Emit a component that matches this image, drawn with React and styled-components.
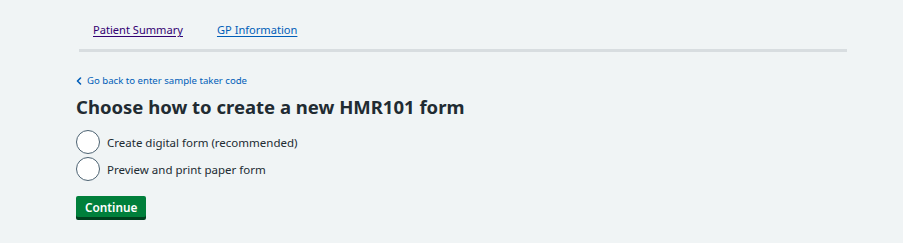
import React from 'react';
import styled, { createGlobalStyle } from 'styled-components';

const GlobalStyle = createGlobalStyle`
  html, body {
    margin: 0;
    padding: 0;
    background: #f0f4f5;
  }
  body {
    font-family: 'Noto Sans', Arial, sans-serif;
    color: #212b32;
  }
`;

const Page = styled.div`
  width: 903px;
  height: 243px;
  box-sizing: border-box;
  padding: 0 56px 0 76px;
`;

const TabBar = styled.nav`
  display: flex;
  gap: 34px;
  margin-left: 3px;
  padding: 21px 0 0 14px;
  height: 28px;
  border-bottom: 3px solid #d8dde0;
`;

const TabLink = styled.a`
  font-size: 11.1px;
  line-height: 18px;
  color: ${({ $visited }) => ($visited ? '#330072' : '#005eb8')};
  text-decoration: underline;
  text-underline-offset: 2px;
  cursor: pointer;
`;

const BackLink = styled.a`
  display: inline-flex;
  align-items: center;
  gap: 5px;
  margin-top: 22px;
  font-size: 9.6px;
  line-height: 14px;
  color: #005eb8;
  text-decoration: none;
`;

const Heading = styled.h1`
  margin: 4px 0 10px;
  font-size: 18.5px;
  line-height: 26px;
  font-weight: 700;
`;

const RadioList = styled.div`
  display: flex;
  flex-direction: column;
  gap: 3px;
`;

const RadioRow = styled.label`
  display: flex;
  align-items: center;
  gap: 7px;
  height: 24px;
  font-size: 11.5px;
  cursor: pointer;
`;

const RadioCircle = styled.span`
  box-sizing: border-box;
  width: 24px;
  height: 24px;
  border: 1.5px solid #4c6272;
  border-radius: 50%;
  background: #ffffff;
  flex-shrink: 0;
`;

const Button = styled.button`
  display: block;
  margin-top: 15px;
  padding: 0 9px;
  height: 21px;
  border: none;
  border-radius: 2px;
  background: #007f3b;
  box-shadow: 0 3px 0 #00401e;
  color: #ffffff;
  font-family: inherit;
  font-size: 11.8px;
  font-weight: 600;
  cursor: pointer;
`;

const Chevron = () => (
  <svg width="6" height="8" viewBox="0 0 6 8" fill="none">
    <path d="M4.5 1 L1.5 4 L4.5 7" stroke="#005eb8" strokeWidth="1.6" strokeLinecap="round" strokeLinejoin="round" />
  </svg>
);

const options = ['Create digital form (recommended)', 'Preview and print paper form'];

const App = () => (
  <Page>
    <GlobalStyle />
    <TabBar>
      <TabLink $visited>Patient Summary</TabLink>
      <TabLink>GP Information</TabLink>
    </TabBar>
    <BackLink>
      <Chevron />
      Go back to enter sample taker code
    </BackLink>
    <Heading>Choose how to create a new HMR101 form</Heading>
    <RadioList>
      {options.map((o) => (
        <RadioRow key={o}>
          <RadioCircle />
          {o}
        </RadioRow>
      ))}
    </RadioList>
    <Button>Continue</Button>
  </Page>
);

export default App;
